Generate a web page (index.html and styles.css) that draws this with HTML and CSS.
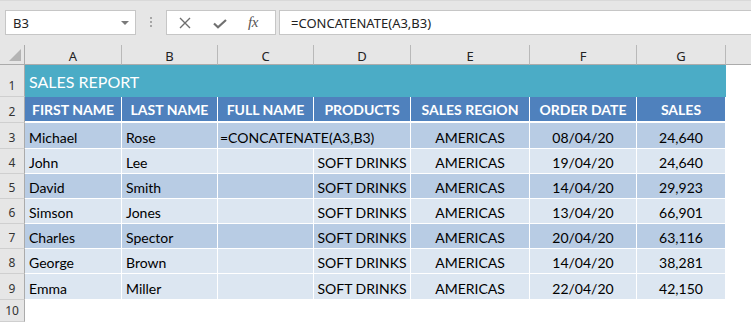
FILE: index.html
```html
<!DOCTYPE html>
<html>
<head>
<meta charset="utf-8">
<link rel="stylesheet" href="styles.css">
</head>
<body>
<div class="app">
  <div class="toolbar">
    <div class="namebox"><span class="nb-text">B3</span><span class="caret"></span></div>
    <div class="grip"><i></i><i></i><i></i></div>
    <div class="fxbox">
      <svg class="ico-x" width="12" height="12" viewBox="0 0 12 12"><path d="M1 1 L11 11 M11 1 L1 11" stroke="#6e6e6e" stroke-width="1.4" fill="none"/></svg>
      <svg class="ico-ok" width="14" height="10" viewBox="0 0 14 10"><path d="M1 4.5 L5 8.3 L13 1" stroke="#707070" stroke-width="2.2" fill="none"/></svg>
      <span class="fx">fx</span>
    </div>
    <div class="formula">=CONCATENATE(A3,B3)</div>
  </div>
  <div class="sheet">
    <div class="corner"><span class="tri"></span></div>
    <div class="ch">A</div><div class="ch">B</div><div class="ch">C</div><div class="ch">D</div><div class="ch">E</div><div class="ch">F</div><div class="ch">G</div><div class="ch end"></div>

    <div class="rh">1</div>
    <div class="title">SALES REPORT</div>
    <div class="blank"></div>

    <div class="rh">2</div>
    <div class="c hd">FIRST NAME</div><div class="c hd">LAST NAME</div><div class="c hd">FULL NAME</div><div class="c hd">PRODUCTS</div><div class="c hd">SALES REGION</div><div class="c hd">ORDER DATE</div><div class="c hd">SALES</div>
    <div class="blank"></div>

    <div class="rh">3</div>
    <div class="c dk l">Michael</div><div class="c dk l">Rose</div><div class="c dk f span2">=CONCATENATE(A3,B3)</div><div class="c dk">AMERICAS</div><div class="c dk">08/04/20</div><div class="c dk">24,640</div>
    <div class="blank"></div>

    <div class="rh">4</div>
    <div class="c lt l">John</div><div class="c lt l">Lee</div><div class="c lt"></div><div class="c lt">SOFT DRINKS</div><div class="c lt">AMERICAS</div><div class="c lt">19/04/20</div><div class="c lt">24,640</div>
    <div class="blank"></div>

    <div class="rh">5</div>
    <div class="c dk l">David</div><div class="c dk l">Smith</div><div class="c dk"></div><div class="c dk">SOFT DRINKS</div><div class="c dk">AMERICAS</div><div class="c dk">14/04/20</div><div class="c dk">29,923</div>
    <div class="blank"></div>

    <div class="rh">6</div>
    <div class="c lt l">Simson</div><div class="c lt l">Jones</div><div class="c lt"></div><div class="c lt">SOFT DRINKS</div><div class="c lt">AMERICAS</div><div class="c lt">13/04/20</div><div class="c lt">66,901</div>
    <div class="blank"></div>

    <div class="rh">7</div>
    <div class="c dk l">Charles</div><div class="c dk l">Spector</div><div class="c dk"></div><div class="c dk">SOFT DRINKS</div><div class="c dk">AMERICAS</div><div class="c dk">20/04/20</div><div class="c dk">63,116</div>
    <div class="blank"></div>

    <div class="rh">8</div>
    <div class="c lt l">George</div><div class="c lt l">Brown</div><div class="c lt"></div><div class="c lt">SOFT DRINKS</div><div class="c lt">AMERICAS</div><div class="c lt">14/04/20</div><div class="c lt">38,281</div>
    <div class="blank"></div>

    <div class="rh">9</div>
    <div class="c lt l">Emma</div><div class="c lt l">Miller</div><div class="c lt"></div><div class="c lt">SOFT DRINKS</div><div class="c lt">AMERICAS</div><div class="c lt">22/04/20</div><div class="c lt">42,150</div>
    <div class="blank"></div>

    <div class="rh">10</div>
    <div class="blank wide"></div>
  </div>
</div>
</body>
</html>
```
FILE: styles.css
```css
* { box-sizing: border-box; }
html, body { margin: 0; padding: 0; background: #fff; }
body { width: 751px; height: 322px; overflow: hidden; }
.app { width: 751px; }

.toolbar {
  height: 45px;
  background: #e6e6e6;
  display: flex;
  align-items: flex-start;
  padding: 10px 0 0 5px;
  border-top: 1px solid #d9d9d9;
}
.namebox {
  width: 131px;
  height: 25px;
  margin-top: -1px;
  background: #fff;
  border: 1px solid #c6c6c6;
  display: flex;
  align-items: center;
  justify-content: space-between;
  padding: 0 6px 0 7px;
  font-family: "Noto Sans", sans-serif;
  font-size: 13px;
  color: #222;
}
.caret {
  width: 0; height: 0;
  border-left: 4px solid transparent;
  border-right: 4px solid transparent;
  border-top: 4px solid #7a7a7a;
  margin-top: 1px;
}
.grip {
  width: 3px;
  margin: 6px 0 0 14px;
  display: flex;
  flex-direction: column;
  gap: 2px;
}
.grip i { display: block; width: 2px; height: 2px; background: #a6a6a6; }
.fxbox {
  margin-left: 13px;
  margin-top: -1px;
  width: 110px;
  height: 25px;
  background: #fff;
  border: 1px solid #c6c6c6;
  display: flex;
  align-items: center;
  padding-left: 12px;
}
.ico-ok { margin-left: 22px; margin-top: 2px; }
.fx {
  margin-left: 21px;
  font-family: "Liberation Serif", serif;
  font-style: italic;
  font-size: 15px;
  color: #555;
  letter-spacing: -0.5px;
}
.formula {
  flex: 1;
  margin-left: 3px;
  margin-right: -2px;
  margin-top: -1px;
  height: 25px;
  background: #fff;
  border: 1px solid #c6c6c6;
  padding-left: 11px;
  display: flex;
  align-items: center;
  font-family: "Noto Sans", sans-serif;
  font-size: 13px;
  color: #222;
}

.sheet {
  display: grid;
  grid-template-columns: 25px 97px 96px 96px 97px 119px 107px 89px 1fr;
  grid-template-rows: 20px 32px 26px 26px 25px 25px 25px 25px 25px 26px 22px;
  background: #fff;
}
.corner {
  background: #e6e6e6;
  border-right: 1px solid #ababab;
  border-bottom: 1px solid #ababab;
  position: relative;
}
.tri {
  position: absolute;
  right: 3px;
  bottom: 3px;
  width: 0; height: 0;
  border-left: 12px solid transparent;
  border-bottom: 12px solid #b4b4b4;
}
.ch {
  background: #e6e6e6;
  border-right: 1px solid #b9b9b9;
  border-bottom: 1px solid #ababab;
  display: flex;
  align-items: center;
  justify-content: center;
  padding-top: 3px;
  font-family: "Noto Sans", sans-serif;
  font-size: 13px;
  color: #222;
}
.ch.end { border-right: none; }
.rh {
  background: #e6e6e6;
  border-right: 1px solid #ababab;
  border-bottom: 1px solid #cfcfcf;
  display: flex;
  align-items: flex-end;
  justify-content: center;
  padding-bottom: 2px;
  font-family: "Noto Sans", sans-serif;
  font-size: 12px;
  color: #333;
}
.title {
  grid-column: span 7;
  background: #4bacc6;
  color: #fff;
  font-family: Lato, sans-serif;
  font-size: 16px;
  display: flex;
  align-items: center;
  padding: 1px 0 0 4px;
}
.blank { background: #fff; }
.blank.wide { grid-column: span 8; }
.c {
  border-right: 1px solid #fff;
  border-bottom: 1px solid #fff;
  display: flex;
  align-items: flex-end;
  justify-content: center;
  padding-bottom: 2px;
  font-family: Lato, sans-serif;
  font-size: 14px;
  color: #000;
  white-space: nowrap;
}
.c.l { justify-content: flex-start; padding-left: 4px; }
.c.f { justify-content: flex-start; padding-left: 2px; }
.span2 { grid-column: span 2; }
.hd {
  background: #4f81bd;
  color: #fff;
  font-weight: 700;
  font-size: 14px;
  border-bottom-width: 2px;
  align-items: center;
  padding-bottom: 0;
  padding-top: 1px;
}
.dk { background: #b8cce4; }
.lt { background: #dce6f1; }
```
